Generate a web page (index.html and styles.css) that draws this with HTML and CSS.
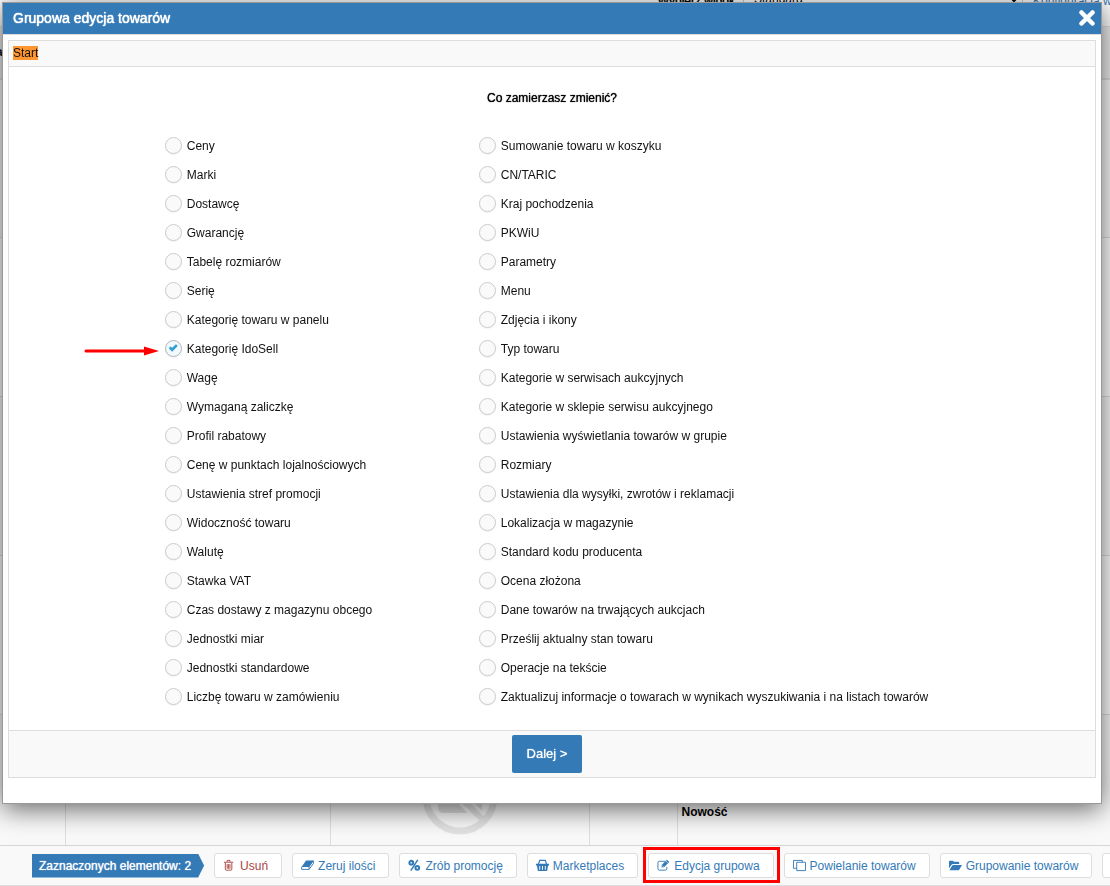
FILE: index.html
```html
<!DOCTYPE html>
<html lang="pl">

<head>
    <meta charset="UTF-8">
    <meta name="viewport" content="width=device-width, initial-scale=1">
    <title>Grupowa edycja towarów</title>
    <link rel="stylesheet" href="styles.css">
</head>

<body>
    <!-- Lista towarów pod oknem -->
    <div class="page">
        <div class="view-bar">
            <label class="view-label" for="view">Wybierz widok</label>
            <select id="view" class="view-select">
                <option>Standard</option>
            </select>
            <a class="view-link" href="#">Konfiguracja widoku</a>
        </div>
        <table class="products">
            <colgroup>
                <col class="col-check">
                <col class="col-name">
                <col class="col-photo">
                <col class="col-price">
                <col>
            </colgroup>
            <thead>
                <tr><th class="cut">a</th><th></th><th></th><th></th><th></th></tr>
            </thead>
            <tbody>
                <tr><td></td><td></td><td></td><td></td><td></td></tr>
                <tr class="odd"><td></td><td></td><td></td><td></td><td></td></tr>
                <tr><td></td><td></td><td></td><td></td><td></td></tr>
                <tr class="odd"><td></td><td></td><td></td><td></td><td></td></tr>
                <tr>
                    <td></td>
                    <td></td>
                    <td class="photo">
                        <svg width="76" height="76" viewBox="0 0 76 76">
                            <path d="M16 26h10l4-6h16l4 6h10v22q0 6-6 6H22q-6 0-6-6z" fill="#ddd" />
                            <circle cx="38" cy="36" r="9" fill="#f9f9f9" />
                            <path d="M14 14l48 48" stroke="#f9f9f9" stroke-width="12" />
                            <path d="M14 14l48 48" stroke="#e2e2e2" stroke-width="6" />
                            <circle cx="38" cy="38" r="34" fill="none" stroke="#e2e2e2" stroke-width="7" />
                        </svg>
                    </td>
                    <td></td>
                    <td class="status">Nowość</td>
                </tr>
            </tbody>
        </table>
    </div>

    <!-- Pasek akcji -->
    <div class="action-bar">
        <span class="selected-count">Zaznaczonych elementów: 2</span>
        <button type="button" class="action danger">
            <svg viewBox="0 0 14 14"><path d="M1 3.500h10M4.500 3V1.500h3V3M2.500 4v7q0 1 1 1h5q1 0 1-1V4M4.500 5.500v5M6 5.500v5M7.500 5.500v5" fill="none" stroke="currentColor" /></svg>
            Usuń
        </button>
        <button type="button" class="action">
            <svg viewBox="0 0 14 14"><path d="M5.500 1.500H14L9 8.500H.5z" fill="currentColor" /><path d="M.7 8.500v2.700h8l4.800-6.500V2M8.700 8.500v2.700" fill="none" stroke="currentColor" /></svg>
            Zeruj ilości
        </button>
        <button type="button" class="action">
            <svg viewBox="0 0 14 14"><path d="M10.500 1L3 12.500" stroke="currentColor" stroke-width="1.600" /><circle cx="3.500" cy="4" r="2" fill="none" stroke="currentColor" stroke-width="2.200" /><circle cx="10" cy="9.500" r="2" fill="none" stroke="currentColor" stroke-width="2.200" /></svg>
            Zrób promocję
        </button>
        <button type="button" class="action">
            <svg viewBox="0 0 14 14"><path d="M2.500 6l1.500-4.500h6L11.500 6" fill="none" stroke="currentColor" stroke-width="1.300" /><path fill-rule="evenodd" d="M0 5h14v2h-1l-1 6H2L1 7H0zM3.500 7.500v4h1v-4zM6.500 7.500v4h1v-4zM9.500 7.500v4h1v-4z" fill="currentColor" /></svg>
            Marketplaces
        </button>
        <button type="button" class="action marked">
            <svg viewBox="0 0 14 14"><path d="M9 2.500H2.500q-1.500 0-1.500 1.500v6.500q0 1.500 1.500 1.500H9q1.500 0 1.500-1.500V8.500" fill="none" stroke="currentColor" /><path d="M5 9V6.500L10.800.8l2.500 2.500L7.500 9z" fill="currentColor" /><path d="M5.800 6.800l1.600 1.600M9.600 2.200l2.400 2.400" stroke="#fff" stroke-width=".6" /></svg>
            Edycja grupowa
        </button>
        <button type="button" class="action">
            <svg viewBox="0 0 14 14"><path d="M4 3.500h9.500v9H4zM3.500 10H.5V1.500h9.500v2" fill="none" stroke="currentColor" /></svg>
            Powielanie towarów
        </button>
        <button type="button" class="action">
            <svg viewBox="0 0 14 14"><path d="M0 10V3q0-1 1-1h3q1 0 1 1h5q1 0 1 1v1.500H4.500Q3.300 5.500 2.500 6.500zM.5 12l3-5Q4 6.500 4.800 6.500H14l-2.800 4.800q-.4.700-1.200.7z" fill="currentColor" /></svg>
            Grupowanie towarów
        </button>
        <button type="button" class="action" aria-label="Więcej">
            <svg viewBox="0 0 14 14"><path d="M2 5l5 5 5-5" fill="none" stroke="currentColor" /></svg>
        </button>
    </div>

    <!-- Okno edycji -->
    <div class="modal">
        <div class="modal-header">
            <h1 class="modal-title">Grupowa edycja towarów</h1>
            <button type="button" class="close" aria-label="Zamknij">
                <svg width="16" height="16" viewBox="0 0 16 16"><path d="M2.500 2.500l11 11M13.500 2.500l-11 11" stroke="#fff" stroke-width="4.500" stroke-linecap="round" /></svg>
            </button>
        </div>
        <form class="wizard">
            <div class="steps"><span class="step">Start</span></div>
            <h2 class="question">Co zamierzasz zmienić?</h2>
            <div class="options">
                <div class="options-col">
                    <label class="option"><input type="radio" name="edit">Ceny</label>
                    <label class="option"><input type="radio" name="edit">Marki</label>
                    <label class="option"><input type="radio" name="edit">Dostawcę</label>
                    <label class="option"><input type="radio" name="edit">Gwarancję</label>
                    <label class="option"><input type="radio" name="edit">Tabelę rozmiarów</label>
                    <label class="option"><input type="radio" name="edit">Serię</label>
                    <label class="option"><input type="radio" name="edit">Kategorię towaru w panelu</label>
                    <label class="option"><input type="radio" name="edit" checked>Kategorię IdoSell
                        <svg class="arrow" width="75" height="10" viewBox="0 0 75 10"><path d="M2 5h60" stroke="#f00" stroke-width="3" stroke-linecap="round" /><path d="M60 .5l15 4.500-15 4.500z" fill="#f00" /></svg>
                    </label>
                    <label class="option"><input type="radio" name="edit">Wagę</label>
                    <label class="option"><input type="radio" name="edit">Wymaganą zaliczkę</label>
                    <label class="option"><input type="radio" name="edit">Profil rabatowy</label>
                    <label class="option"><input type="radio" name="edit">Cenę w punktach lojalnościowych</label>
                    <label class="option"><input type="radio" name="edit">Ustawienia stref promocji</label>
                    <label class="option"><input type="radio" name="edit">Widoczność towaru</label>
                    <label class="option"><input type="radio" name="edit">Walutę</label>
                    <label class="option"><input type="radio" name="edit">Stawka VAT</label>
                    <label class="option"><input type="radio" name="edit">Czas dostawy z magazynu obcego</label>
                    <label class="option"><input type="radio" name="edit">Jednostki miar</label>
                    <label class="option"><input type="radio" name="edit">Jednostki standardowe</label>
                    <label class="option"><input type="radio" name="edit">Liczbę towaru w zamówieniu</label>
                </div>
                <div class="options-col">
                    <label class="option"><input type="radio" name="edit">Sumowanie towaru w koszyku</label>
                    <label class="option"><input type="radio" name="edit">CN/TARIC</label>
                    <label class="option"><input type="radio" name="edit">Kraj pochodzenia</label>
                    <label class="option"><input type="radio" name="edit">PKWiU</label>
                    <label class="option"><input type="radio" name="edit">Parametry</label>
                    <label class="option"><input type="radio" name="edit">Menu</label>
                    <label class="option"><input type="radio" name="edit">Zdjęcia i ikony</label>
                    <label class="option"><input type="radio" name="edit">Typ towaru</label>
                    <label class="option"><input type="radio" name="edit">Kategorie w serwisach aukcyjnych</label>
                    <label class="option"><input type="radio" name="edit">Kategorie w sklepie serwisu aukcyjnego</label>
                    <label class="option"><input type="radio" name="edit">Ustawienia wyświetlania towarów w grupie</label>
                    <label class="option"><input type="radio" name="edit">Rozmiary</label>
                    <label class="option"><input type="radio" name="edit">Ustawienia dla wysyłki, zwrotów i reklamacji</label>
                    <label class="option"><input type="radio" name="edit">Lokalizacja w magazynie</label>
                    <label class="option"><input type="radio" name="edit">Standard kodu producenta</label>
                    <label class="option"><input type="radio" name="edit">Ocena złożona</label>
                    <label class="option"><input type="radio" name="edit">Dane towarów na trwających aukcjach</label>
                    <label class="option"><input type="radio" name="edit">Prześlij aktualny stan towaru</label>
                    <label class="option"><input type="radio" name="edit">Operacje na tekście</label>
                    <label class="option"><input type="radio" name="edit">Zaktualizuj informacje o towarach w wynikach wyszukiwania i na listach towarów</label>
                </div>
            </div>
            <div class="wizard-footer">
                <button type="button" class="next">Dalej &gt;</button>
            </div>
        </form>
    </div>
</body>

</html>
```
FILE: styles.css
```css
* {
    box-sizing: border-box;
}

body {
    margin: 0;
    height: 100vh;
    overflow: hidden;
    background-color: #f9f9f9;
    color: #111;
    font-family: "Liberation Sans", Arial, sans-serif;
    font-size: 12px;
}

button,
select {
    font-family: inherit;
    font-size: inherit;
}

/* page under the modal */
.page {
    margin-top: -18px;
}

.view-bar {
    display: flex;
    justify-content: flex-end;
    height: 44px;
    padding-top: 7px;
    background-color: #fff;
    white-space: nowrap;
}

.view-label {
    margin-right: 8px;
    color: #000;
    line-height: 24px;
    text-shadow: 0 0 1px #000;
}

.view-select {
    width: 280px;
    height: 20px;
    padding: 0 6px;
    border: 1px solid #ccc;
    background-color: #fff;
    color: #000;
}

.view-link {
    width: 87px;
    padding-left: 10px;
    color: #337ab7;
    line-height: 24px;
    text-decoration: none;
}

.products {
    width: 100%;
    table-layout: fixed;
    border-collapse: collapse;
}

.col-check {
    width: 65px;
}

.col-name {
    width: 265px;
}

.col-photo {
    width: 259px;
}

.col-price {
    width: 88px;
}

.products th {
    height: 52px;
    padding: 0;
    background-color: #eee;
    border-top: 1px solid #ddd;
    border-bottom: 2px solid #ddd;
    text-align: left;
}

.products .cut {
    text-indent: -4px;
}

.products td {
    height: 159px;
    padding: 0 4px;
    border-right: 1px solid #ddd;
    border-bottom: 1px solid #ddd;
}

.products td:last-child {
    border-right: none;
}

.products .odd {
    background-color: #fff;
}

.products .photo {
    padding-top: 6px;
}

.photo svg {
    display: block;
    margin: 0 auto;
}

.products .status {
    padding-top: 36px;
    color: #000;
    font-weight: bold;
}

/* action bar */
.action-bar {
    position: fixed;
    right: 0;
    bottom: 0;
    left: 0;
    display: flex;
    align-items: center;
    gap: 10px;
    height: 41px;
    padding: 0 0 0 32px;
    overflow: hidden;
    background-color: #f9f9f9;
    border-top: 1px solid #d5d5d5;
    border-bottom: 1px solid #ddd;
    white-space: nowrap;
}

.selected-count {
    flex: none;
    height: 24px;
    padding: 0 13px 0 7px;
    background-color: #337ab7;
    clip-path: polygon(0 0, calc(100% - 6px) 0, 100% 50%, calc(100% - 6px) 100%, 0 100%);
    color: #fff;
    line-height: 24px;
    text-shadow: 0 0 1px #fff;
}

.action {
    position: relative;
    display: flex;
    flex: none;
    align-items: center;
    gap: 4px;
    height: 25px;
    padding: 0 13px 0 8px;
    background-color: #fff;
    border: 1px solid #ddd;
    border-radius: 3px;
    color: #337ab7;
    cursor: pointer;
}

.action svg {
    width: 13px;
    height: 13px;
}

.danger {
    color: #a94442;
}

.marked::after {
    content: "";
    position: absolute;
    inset: -7px -7px -6px -6px;
    border: 3px solid #f00;
}

/* modal */
.modal {
    position: fixed;
    top: 2px;
    right: 8px;
    left: 2px;
    padding-bottom: 25px;
    background-color: #fff;
    border: 1px solid #999;
    box-shadow: 0 5px 25px rgba(0, 0, 0, 0.6);
}

.modal-header {
    display: flex;
    align-items: center;
    justify-content: space-between;
    height: 32px;
    padding: 0 6px 2px 10px;
    background-color: #337ab7;
    border-bottom: 1px solid #ddd;
}

.modal-title {
    margin: 0;
    color: #fff;
    font-size: 14px;
    font-weight: normal;
    text-shadow: 0 0 1px #fff, 0 0 1px #fff;
}

.close {
    display: flex;
    padding: 0;
    background: none;
    border: none;
    cursor: pointer;
}

.wizard {
    margin: 5px 5px 0;
    border: 1px solid #ddd;
}

.steps {
    height: 26px;
    padding: 0 4px;
    background-color: #f9f9f9;
    border-bottom: 1px solid #ddd;
    line-height: 24px;
}

.step {
    background-color: #ff9632;
}

.question {
    margin: 24px 0 25px;
    color: #000;
    font-size: 12px;
    font-weight: normal;
    line-height: 15px;
    text-align: center;
    text-shadow: 0 0 1px #000;
}

.options {
    display: flex;
    justify-content: center;
    margin-bottom: 19px;
}

.options-col:first-child {
    width: 314px;
}

.options-col:last-child {
    padding-right: 11px;
}

.option {
    position: relative;
    display: flex;
    align-items: center;
    gap: 5px;
    height: 29px;
    white-space: nowrap;
}

.option input {
    position: relative;
    width: 17px;
    height: 17px;
    margin: 0;
    appearance: none;
    background-color: #fafafa;
    border: 1px solid #ccc;
    border-radius: 50%;
    box-shadow: 0 1px 1px rgba(0, 0, 0, 0.05);
}

.option input:checked {
    background-color: #f3f8fb;
    border-color: #adb8c0;
}

.option input:checked::after {
    content: "";
    position: absolute;
    top: 3px;
    left: 3px;
    width: 9px;
    height: 8px;
    background-color: #2f9fd4;
    clip-path: polygon(0 52%, 18% 30%, 38% 48%, 80% 2%, 100% 24%, 38% 98%);
}

.arrow {
    position: absolute;
    top: 12px;
    left: -81px;
}

.wizard-footer {
    display: flex;
    justify-content: center;
    padding: 4px 10px 4px 0;
    background-color: #f9f9f9;
    border-top: 1px solid #ddd;
}

.next {
    width: 70px;
    height: 38px;
    padding: 0 0 2px;
    background-color: #337ab7;
    border: none;
    border-radius: 2px;
    color: #fff;
    font-size: 13px;
    text-shadow: 0 0 1px #fff;
    cursor: pointer;
}
```
